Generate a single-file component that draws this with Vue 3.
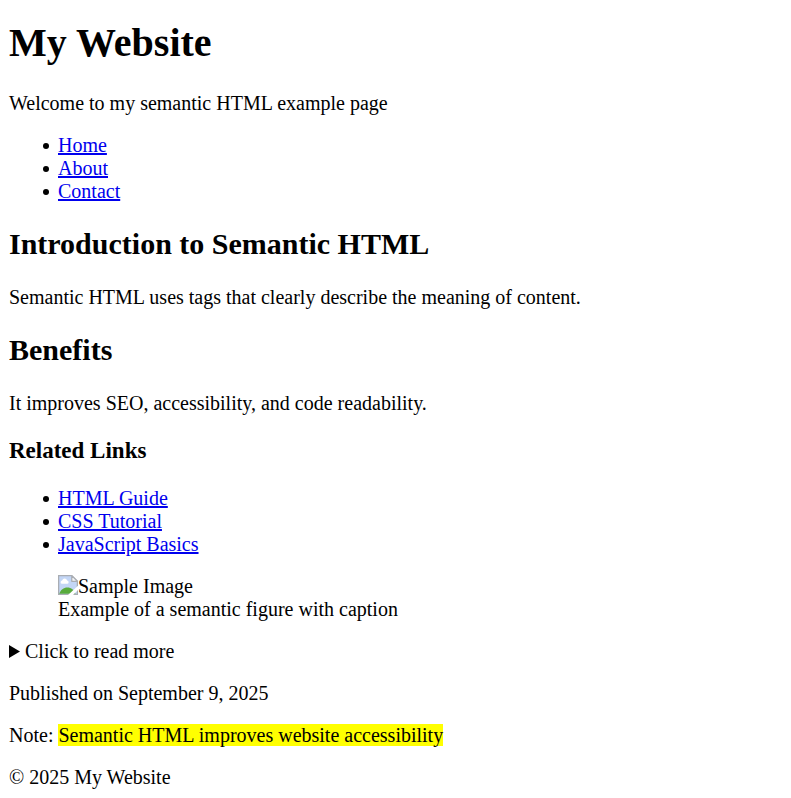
<template>
  <div class="page">
    <header>
      <h1>My Website</h1>
      <p>Welcome to my semantic HTML example page</p>
      <nav>
        <ul>
          <li v-for="item in navItems" :key="item.href">
            <a :href="item.href">{{ item.label }}</a>
          </li>
        </ul>
      </nav>
    </header>

    <main>
      <article>
        <h2>Introduction to Semantic HTML</h2>
        <p>Semantic HTML uses tags that clearly describe the meaning of content.</p>
        <section>
          <h2>Benefits</h2>
          <p>It improves SEO, accessibility, and code readability.</p>
        </section>
      </article>

      <aside>
        <h3>Related Links</h3>
        <ul>
          <li v-for="link in relatedLinks" :key="link.href">
            <a :href="link.href">{{ link.label }}</a>
          </li>
        </ul>
      </aside>

      <figure>
        <div class="missing-image">
          <svg class="missing-icon" viewBox="0 0 16 16" aria-hidden="true">
            <path d="M0.5 0.5H11L15.5 5V15.5H0.5Z" fill="#c3d6f6" stroke="#a9adb3" />
            <path d="M3 7a1.400 1.400 0 0 1 .3-2.700 2.100 2.100 0 0 1 4 0A1.400 1.400 0 0 1 7.600 7Z" fill="#fff" />
            <path d="M1 15C2 12 4.500 10 7.500 10c3 0 5.500 2 6.500 5Z" fill="#58ab3c" />
            <path d="M11 0.500V5H15.500Z" fill="#f4f6f8" stroke="#a9adb3" stroke-linejoin="round" />
            <path d="M8 16 16 8.500V12L12 16Z" fill="#fff" />
          </svg>
          <span>Sample Image</span>
        </div>
        <figcaption>Example of a semantic figure with caption</figcaption>
      </figure>

      <details>
        <summary>
          <svg class="arrow" viewBox="0 0 11 13" aria-hidden="true">
            <path d="M0 0 11 6.500 0 13Z" />
          </svg>
          <span>Click to read more</span>
        </summary>
      </details>

      <p>Published on <time datetime="2025-09-09">September 9, 2025</time></p>
      <p>Note: <mark>Semantic HTML improves website accessibility</mark></p>
    </main>

    <footer>
      <p>© 2025 My Website</p>
    </footer>
  </div>
</template>

<script setup>
const navItems = [
  { label: 'Home', href: '#home' },
  { label: 'About', href: '#about' },
  { label: 'Contact', href: '#contact' }
];

const relatedLinks = [
  { label: 'HTML Guide', href: '#html-guide' },
  { label: 'CSS Tutorial', href: '#css-tutorial' },
  { label: 'JavaScript Basics', href: '#javascript-basics' }
];
</script>

<style>
body {
  margin: 0;
  background: #fff;
}
</style>

<style scoped>
.page {
  padding: 20px 9px 0;
  font-family: "Liberation Serif", "Times New Roman", serif;
  font-size: 20px;
  line-height: 23px;
  color: #000;
}

h1 {
  margin: 0 0 27px;
  font-size: 40px;
  line-height: 45px;
}

h2 {
  margin: 24px 0 26px;
  font-size: 30px;
  line-height: 33px;
}

h3 {
  margin: 22px 0 23px;
  font-size: 23px;
  line-height: 27px;
}

p,
ul,
details {
  margin: 19px 0;
}

ul {
  padding-left: 34px;
  list-style: none;
}

li {
  display: flex;
  align-items: center;
  gap: 9px;
}

/* Round bullet in front of each link */
li::before {
  content: "";
  width: 6px;
  height: 6px;
  border-radius: 50%;
  background: #000;
}

a {
  color: #0000ee;
  text-decoration: underline;
}

figure {
  margin: 19px 49px;
}

.missing-image {
  display: flex;
  align-items: flex-start;
}

.missing-icon {
  flex: none;
  width: 20px;
  height: 20px;
}

summary {
  display: flex;
  align-items: center;
  gap: 5px;
  cursor: pointer;
}

.arrow {
  width: 11px;
  height: 13px;
}

details[open] .arrow {
  transform: rotate(90deg);
}

mark {
  background: #ff0;
  color: #000;
}

footer p {
  margin-bottom: 0;
}
</style>
